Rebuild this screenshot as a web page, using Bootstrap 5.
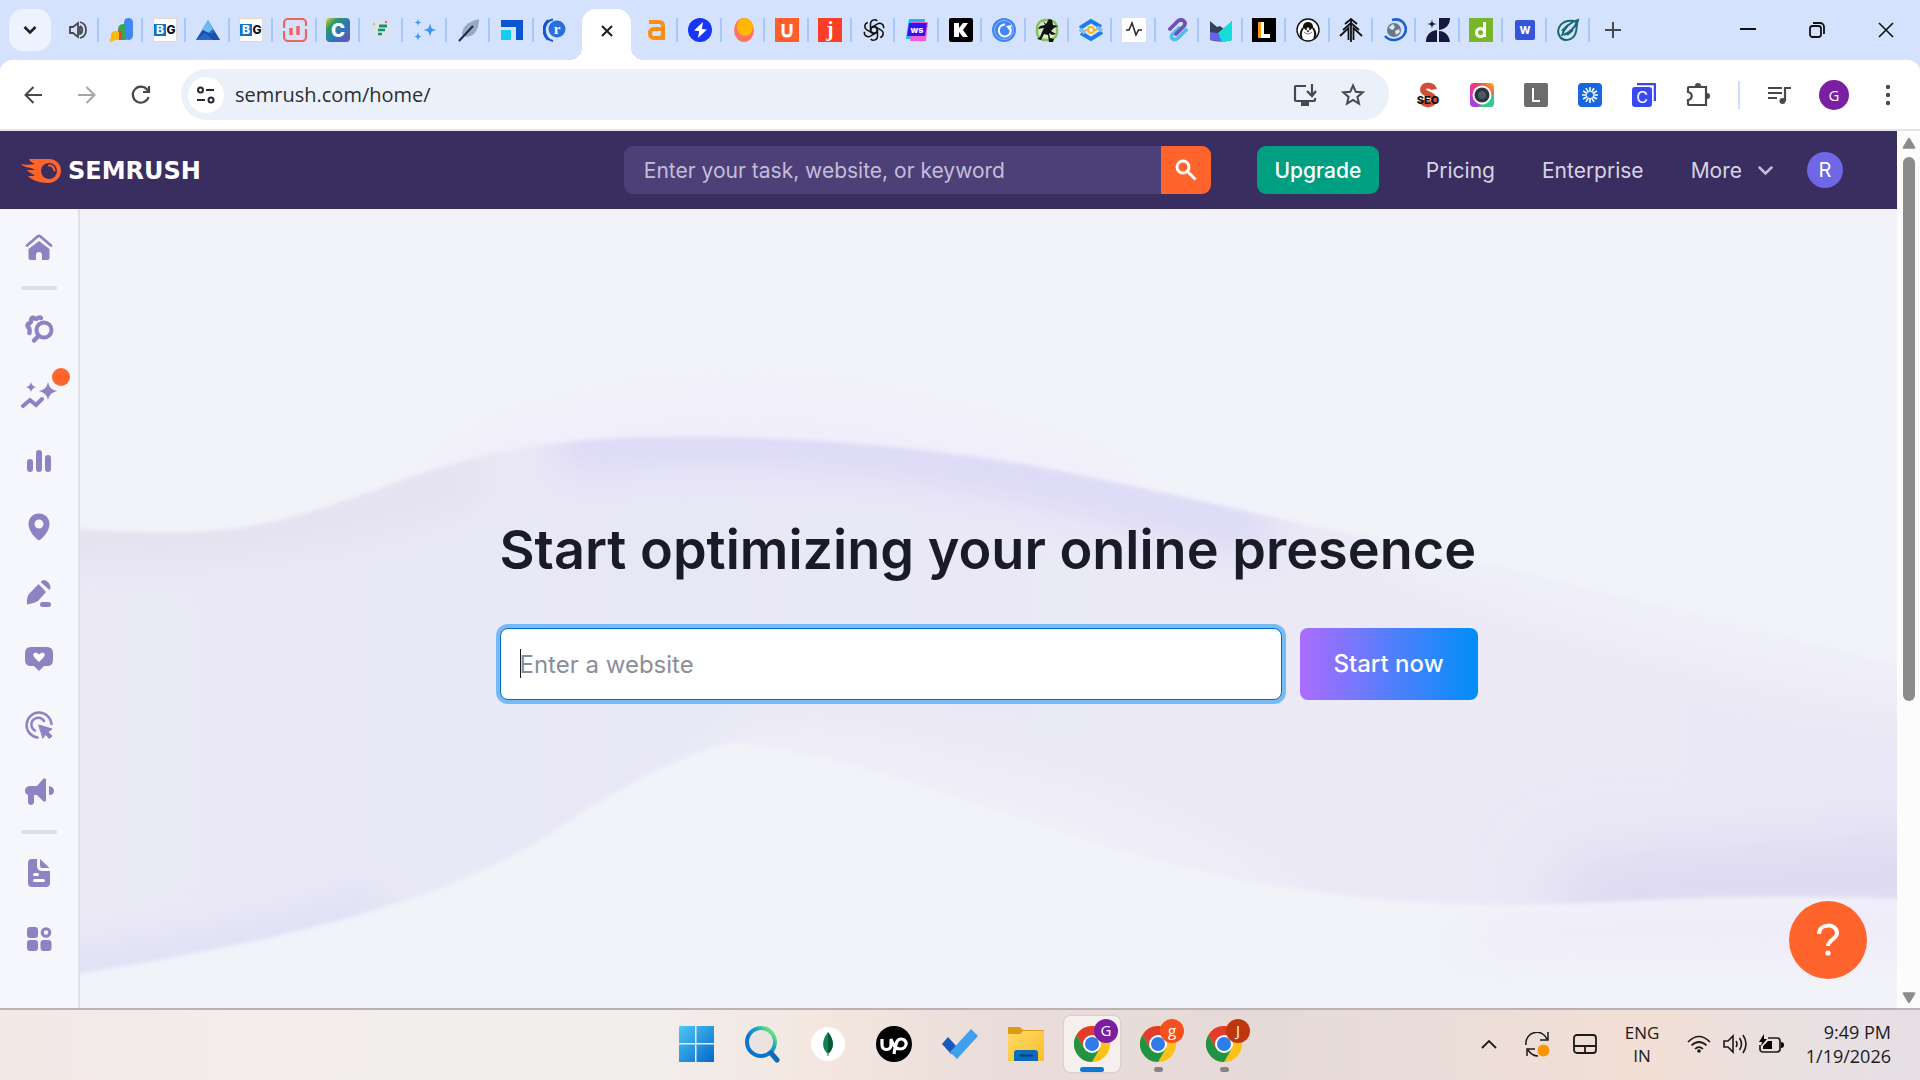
<!DOCTYPE html>
<html lang="en">
<head>
<meta charset="utf-8">
<meta name="viewport" content="width=device-width, initial-scale=1">
<title>Semrush Home</title>
<link href="https://cdn.jsdelivr.net/npm/bootstrap@5.3.0/dist/css/bootstrap.min.css" rel="stylesheet">
<style>
  body { font-family: Inter, "Liberation Sans", sans-serif; background: #f2f3f9; overflow: hidden; }
  button { border: 0; background: none; padding: 0; color: inherit; }
  svg { display: block; flex: none; }
  svg text { font-family: Inter, sans-serif; text-anchor: middle; }

  /* tab strip */
  .tab-strip { background: #d5e2fd; height: 60px; }
  .tab-search { width: 42px; height: 42px; margin: 0 5px 0 9px; border-radius: 14px; background: #edf3fe; }
  .tabs-before { flex: 0 1 521px; }
  .tabs-after { flex: 0 1 955px; }
  .tab-item { flex: 1 1 0; min-width: 0; height: 24px; background: linear-gradient(#a8c7fa, #a8c7fa) right center / 2px 24px no-repeat; }
  .tabs-before .tab-item:last-child { background: none; }
  .tab-active { width: 49px; height: 51px; margin: 0 4px 0 5px; background: #fff; border-radius: 14px 14px 0 0; }
  .tab-active::before, .tab-active::after { content: ""; position: absolute; bottom: 0; width: 12px; height: 12px; }
  .tab-active::before { right: 100%; background: radial-gradient(circle at 0 0, transparent 12px, #fff 12px); }
  .tab-active::after { left: 100%; background: radial-gradient(circle at 100% 0, transparent 12px, #fff 12px); }
  .new-tab { width: 46px; height: 42px; }
  .win-btn { width: 69px; height: 60px; }

  /* toolbar */
  .toolbar-wrap { background: #d5e2fd; }
  .toolbar { background: #fff; height: 71px; border-radius: 12px 12px 0 0; padding: 0 5px 0 6px; border-bottom: 2px solid #e2e3ea; }
  .tool-btn { width: 54px; height: 48px; }
  .address { height: 51px; border-radius: 26px; background: #ebf1fa; margin: 0 12px 0 13px; padding: 0 12px 0 7px; }
  .site-info { width: 36px; height: 36px; border-radius: 50%; background: #fff; }
  .address input { border: 0; background: none; outline: 0; padding: 0 0 0 11px; min-width: 0; font: 20px/28px "Open Sans", "Noto Sans", sans-serif; color: #2c2d30; }
  .addr-btn { width: 48px; height: 48px; }
  .tool-sep { width: 2px; height: 28px; margin: 0 13px; background: #cfe0fc; }
  .user-dot { width: 30px; height: 30px; border-radius: 50%; background: #7b1fa2; color: #fff; font: 15px/30px "Open Sans", sans-serif; }

  /* site header */
  .site-header { background: #392e5f; height: 78px; padding: 0 54px 0 21px; font-size: 21px; color: #d7d3e4; }
  .brand { color: #fff; font: bold 24px/30px "DejaVu Sans", sans-serif; gap: 7px; padding-top: 2px; }
  .brand:hover { color: #fff; }
  .site-search { flex: 0 1 587px; height: 48px; margin-right: 46px; border-radius: 9px; overflow: hidden; background: #4d4079; }
  .site-search input { border: 0; outline: 0; background: none; color: #fff; padding: 2px 20px 0; min-width: 0; font-size: 21px; }
  .site-search input::placeholder { color: #c4bcd9; opacity: 1; }
  .site-search button { width: 50px; background: #ff642d; }
  .head-nav { gap: 47px; }
  .head-nav a { color: #d7d3e4; padding-top: 2px; }
  .head-nav .upgrade { width: 122px; height: 48px; border-radius: 9px; background: #009f81; color: #fff; font-weight: 500; line-height: 46px; }
  .member { width: 36px; height: 36px; margin-left: 34px; border-radius: 50%; background: #6f67e6; color: #fff; font-size: 20px; line-height: 36px; }

  /* side bar */
  .side { width: 80px; padding-top: 5px; background: #f5f7fc; border-right: 2px solid #dfe1e9; color: #8f82c3; }
  .side a { height: 66px; color: inherit; }
  .side-sep { height: 16px; }
  .side-sep span { width: 36px; height: 4px; border-radius: 2px; background: #dfe1e6; }
  .news-dot { top: 6px; right: 8px; width: 18px; height: 18px; border-radius: 50%; background: #ff642d; }

  /* hero */
  .hero { background: #f2f3f9; }
  .hero-bg { inset: 0; width: 100%; height: 100%; }
  .hero-box { width: 978px; max-width: 100%; }
  .hero-box h1 { font-size: 54px; line-height: 64px; font-weight: 600; color: #191b26; margin-bottom: 46px; white-space: nowrap; }
  .hero-form { gap: 18px; }
  .hero-form input { height: 72px; min-width: 0; border: 1px solid #006dca; border-radius: 8px; padding: 2px 19px 0; font-size: 24px; outline: 0; box-shadow: 0 0 0 4px #76bbf5; background: linear-gradient(#191b26, #191b26) 19px center / 1px 29px no-repeat #fff; }
  .hero-form input::placeholder { color: #8a8e9b; opacity: 1; }
  .hero-form button { width: 178px; height: 72px; border-radius: 8px; font-size: 24px; font-weight: 500; color: #fff; background: linear-gradient(90deg, #ab6cfe, #008ff8); }
  .help { right: 30px; bottom: 29px; width: 78px; height: 78px; border-radius: 50%; background: #ff642d; }

  /* scroll track */
  .track { width: 23px; background: #fcfcfc; padding: 6px 0 4px; }
  .thumb { width: 12px; flex: 0 1 544px; margin-top: 8px; border-radius: 6px; background: #8b8b8b; }

  /* task bar */
  .task-bar { height: 72px; border-top: 2px solid #bbb2b5; background: linear-gradient(90deg, #f3e9e7, #f2eeed 20%, #f1eeec 34%, #f4e6df 43%, #e9dcd9 53%, #e6dad8 66%, #eaddd9 75%, #f2dfd5 86%, #e9e0e1 93%, #e5dfe5); color: #1b1b1b; font: 18px/24px "Open Sans", "Noto Sans", sans-serif; padding-bottom: 2px; }
  .app { width: 66px; height: 68px; }
  .app-tile { width: 56px; height: 56px; border-radius: 6px; }
  .app-open { background: #f5f0ee; box-shadow: 0 0 2px #b9aeac; }
  .app-run::after { content: ""; position: absolute; bottom: 0; width: 9px; height: 5px; border-radius: 3px; background: #8c8381; }
  .app-open::after { content: ""; position: absolute; bottom: 0; width: 24px; height: 5px; border-radius: 3px; background: #0a78d4; }
  .app-user { top: 3px; right: 2px; width: 24px; height: 24px; border-radius: 50%; color: #fff; font-size: 15px; line-height: 23px; }
  .task-side { padding: 0 29px; }
  .tray-wide { width: 48px; height: 60px; }
  .tray-slim { width: 36px; height: 60px; }
  .lang { width: 72px; padding-right: 6px; line-height: 23px; font-size: 17px; }
  .clock { width: 102px; }
</style>
<script src="https://cdn.jsdelivr.net/npm/bootstrap@5.3.0/dist/js/bootstrap.bundle.min.js"></script>
</head>
<body class="d-flex flex-column min-vh-100">

<svg width="0" height="0" class="position-absolute" aria-hidden="true">
  <symbol id="chrome" viewBox="0 0 36 36">
    <circle cx="18" cy="18" r="18" fill="#fbc116"/>
    <path d="M18 9H33.600A18 18 0 0 0 2.400 9L10.200 22.500Z" fill="#e33b2e"/>
    <path d="M2.400 9A18 18 0 0 0 18 36L25.800 22.500 18 18 10.200 22.500Z" fill="#229342"/>
    <circle cx="18" cy="18" r="9" fill="#fff"/><circle cx="18" cy="18" r="7" fill="#2f7bea"/>
  </symbol>
</svg>

<div class="tab-strip d-flex align-items-center">
  <button class="tab-search d-flex align-items-center justify-content-center" aria-label="Search tabs"><svg width="14" height="10" viewBox="0 0 14 10" fill="none" stroke="#1c1d20" stroke-width="2.500"><path d="m1.500 2 5.500 5.500L12.500 2"/></svg></button>
  <div class="tabs-before d-flex">
    <button class="tab-item d-flex justify-content-center" aria-label="Playing audio"><svg width="24" height="24" viewBox="0 0 24 24" fill="none" stroke="#46484d" stroke-width="1.800"><path d="M4 9v6h3l5 4V5L7 9Z"/><path d="M14 8v8c3-1 3-7 0-8M14 4c8 2 8 14 0 16"/></svg></button>
    <button class="tab-item d-flex justify-content-center" aria-label="Ads tab"><svg width="24" height="24" viewBox="0 0 24 24"><rect x="15" width="9" height="22" rx="4.500" fill="#4285f4"/><path d="M9 22V11a5 5 0 0 1 8-4v15Z" fill="#34a853"/><path d="M9 12c3 0 4 3 4 10H9Z" fill="#ea4335"/><path d="M2 16c2-4 7-4 8-1v7H6l-4 2-2-2 2-2Z" fill="#fbbc04"/></svg></button>
    <button class="tab-item d-flex justify-content-center" aria-label="BG tab"><svg width="24" height="24" viewBox="0 0 24 24"><path d="M.5.5h23v23H.5Z" fill="#fff" stroke="#e6d8c8"/><path d="M1 6h12v12H1Z" fill="#1573c6"/><text x="7" y="16" font-size="12" font-weight="800" fill="#fff">B</text><text x="18" y="16" font-size="12" font-weight="800" fill="#111">G</text></svg></button>
    <button class="tab-item d-flex justify-content-center" aria-label="Mountain tab"><svg width="24" height="24" viewBox="0 0 24 24"><path d="M12 2 24 22H0Z" fill="#2d6fd0"/><path d="m12 2 5 9-5 4-6-3Z" fill="#6fb9f2"/><path d="m7 12 8 4 3-3 6 9H0Z" fill="#1b4fae"/><path d="m1 21 8-6 8 7H0Z" fill="#2b67c8"/></svg></button>
    <button class="tab-item d-flex justify-content-center" aria-label="BG tab"><svg width="24" height="24" viewBox="0 0 24 24"><path d="M.5.5h23v23H.5Z" fill="#fff" stroke="#e6d8c8"/><path d="M1 6h12v12H1Z" fill="#1573c6"/><text x="7" y="16" font-size="12" font-weight="800" fill="#fff">B</text><text x="18" y="16" font-size="12" font-weight="800" fill="#111">G</text></svg></button>
    <button class="tab-item d-flex justify-content-center" aria-label="Charts tab"><svg width="24" height="24" viewBox="0 0 24 24" fill="none" stroke="#f1645b" stroke-width="2.200"><path d="M1 10V5a4 4 0 0 1 4-4h14a4 4 0 0 1 4 4v3M1 13v6a4 4 0 0 0 4 4h14a4 4 0 0 0 4-4v-8"/><path d="M8 10v7M15 8v9" stroke-width="3.500"/></svg></button>
    <button class="tab-item d-flex justify-content-center" aria-label="C tab"><svg width="24" height="24" viewBox="0 0 24 24"><defs><linearGradient id="cg" x1="0" y1="0" x2="1" y2="1"><stop stop-color="#e7d23a"/><stop offset=".25" stop-color="#2d9a63"/><stop offset=".55" stop-color="#2a79b9"/><stop offset="1" stop-color="#6a50b8"/></linearGradient></defs><rect width="24" height="24" rx="4" fill="url(#cg)"/><text x="12" y="19" font-size="19" font-weight="800" fill="#fff">C</text></svg></button>
    <button class="tab-item d-flex justify-content-center" aria-label="F tab"><svg width="24" height="24" viewBox="0 0 24 24"><circle cx="12" cy="12" r="10" fill="#dde4ea"/><path d="M9 8h8" stroke="#17936a" stroke-width="3"/><path d="M8 12h7" stroke="#17936a" stroke-width="2.500"/><path d="M8 16h4" stroke="#17936a" stroke-width="2.500"/><circle cx="4" cy="6" r="1.200" fill="#f2b540"/><circle cx="16" cy="4" r="1.200" fill="#e66"/></svg></button>
    <button class="tab-item d-flex justify-content-center" aria-label="Sparkles tab"><svg width="24" height="24" viewBox="0 0 24 24" fill="#3f97f0"><path d="M17 5c1 5 1.500 6 6.500 7-5 1-5.500 2-6.500 7-1-5-1.500-6-6.500-7 5-1 5.500-2 6.500-7ZM5 1c.5 2.500 1 3 3.500 3.500C6 5 5.500 5.500 5 8c-.5-2.500-1-3-3.500-3.500C4 4 4.500 3.500 5 1ZM5 14c.5 3 1 4 4 4.500-3 .5-3.500 1.500-4 4.500-.5-3-1-4-4-4.500 3-.5 3.500-1.500 4-4.500Z"/></svg></button>
    <button class="tab-item d-flex justify-content-center" aria-label="Feather tab"><svg width="24" height="24" viewBox="0 0 24 24"><path d="M22 1C10 4 5 9 5 17l5 2c8-1 12-8 12-18Z" fill="#9aa9c2"/><path d="M2 23 16 8" stroke="#14285c" stroke-width="2"/></svg></button>
    <button class="tab-item d-flex justify-content-center" aria-label="Blocks tab"><svg width="24" height="24" viewBox="0 0 24 24"><path d="M1 2h22v20h-7V9H1Z" fill="#0a55d4"/><path d="M1 12h10v10H1Z" fill="#14cdf5"/></svg></button>
    <button class="tab-item d-flex justify-content-center" aria-label="R tab"><svg width="24" height="24" viewBox="0 0 24 24"><path d="M10 1.500C-1 3-1 21 10 23M5 2c-6 6-6 14 0 20" fill="none" stroke="#1257cf" stroke-width="2"/><circle cx="14" cy="11" r="8.500" fill="#2a6fe0"/><text x="14" y="16" font-size="15" font-weight="700" fill="#fff" style="font-family:'Liberation Serif',serif">r</text></svg></button>
  </div>
  <button class="tab-active position-relative align-self-end d-flex align-items-center justify-content-center pb-2" aria-label="Close current tab"><svg width="12" height="12" viewBox="0 0 12 12" stroke="#1c1d20" stroke-width="2"><path d="m1 1 10 10M11 1 1 11"/></svg></button>
  <div class="tabs-after d-flex">
    <button class="tab-item d-flex justify-content-center" aria-label="Ahrefs tab"><svg width="24" height="24" viewBox="0 0 24 24" fill="none" stroke="#ff8d13" stroke-width="4"><path d="M4 4h10q4 0 4 4v14M18 11h-9q-4 0-4 4.500T9 20h4q5 0 5-4"/></svg></button>
    <button class="tab-item d-flex justify-content-center" aria-label="Bolt tab"><svg width="24" height="24" viewBox="0 0 24 24"><circle cx="12" cy="12" r="12" fill="#1736f5"/><path d="m15 4-9 8.500 5 .5v1l-1 6 9-8.500-5-.5v-1Z" fill="#fff"/></svg></button>
    <button class="tab-item d-flex justify-content-center" aria-label="Egg tab"><svg width="24" height="24" viewBox="0 0 24 24"><ellipse cx="12" cy="12" rx="10" ry="12" fill="#fb7660"/><ellipse cx="13" cy="9" rx="8" ry="9" fill="#ffb800"/></svg></button>
    <button class="tab-item d-flex justify-content-center" aria-label="U tab"><svg width="24" height="24" viewBox="0 0 24 24"><path d="M0 0h24v24H0Z" fill="#ff5e2b"/><path d="M8 6v8q0 4 4 4t4-4V6" fill="none" stroke="#fff" stroke-width="3"/></svg></button>
    <button class="tab-item d-flex justify-content-center" aria-label="J tab"><svg width="24" height="24" viewBox="0 0 24 24"><path d="M0 0h24v24H0Z" fill="#fb3e25"/><text x="12" y="18" font-size="21" font-weight="700" fill="#fff" style="font-family:'Liberation Serif',serif">j</text></svg></button>
    <button class="tab-item d-flex justify-content-center" aria-label="Assistant tab"><svg width="24" height="24" viewBox="0 0 24 24" fill="none" stroke="#111" stroke-width="1.500"><path id="petal" d="M12 8.500 8.500 10.500V5.800a4 4 0 0 1 6.800-2.900M8.500 10.500v3.500"/><use href="#petal" transform="rotate(60 12 12)"/><use href="#petal" transform="rotate(120 12 12)"/><use href="#petal" transform="rotate(180 12 12)"/><use href="#petal" transform="rotate(240 12 12)"/><use href="#petal" transform="rotate(300 12 12)"/></svg></button>
    <button class="tab-item d-flex justify-content-center" aria-label="WS tab"><svg width="24" height="24" viewBox="0 0 24 24"><path d="M4 1h16l-2 20H1Z" fill="#13bdf5"/><path d="M7 4h16l-2 19H5Z" fill="#f25ed6"/><path d="M4 5h18l-2 13H2Z" fill="#3a11ee"/><text x="12" y="15" font-size="9" font-weight="800" fill="#fff">ws</text></svg></button>
    <button class="tab-item d-flex justify-content-center" aria-label="K tab"><svg width="24" height="24" viewBox="0 0 24 24"><rect width="24" height="24" rx="2" fill="#000"/><path d="M5 5h5v5l4-5h5l-5 7 5 7h-5l-4-5v5H5Z" fill="#fff"/></svg></button>
    <button class="tab-item d-flex justify-content-center" aria-label="Cycle tab"><svg width="24" height="24" viewBox="0 0 24 24"><circle cx="12" cy="12" r="12" fill="#4285f4"/><circle cx="12" cy="12" r="9.500" fill="none" stroke="#8fb7f9" stroke-width="1"/><path d="M13 6.500a6 6 0 1 0 5.500 4" fill="none" stroke="#fff" stroke-width="2"/><path d="m14 8 6-1-2 6Z" fill="#fff"/></svg></button>
    <button class="tab-item d-flex justify-content-center" aria-label="Frog tab"><svg width="24" height="24" viewBox="0 0 24 24"><rect x="2" y="2" width="20" height="20" rx="8" fill="#d7ecc8" stroke="#84bf58" stroke-width="2.500"/><path d="m8 3 3 3 3-5 3 1 1 5 5 1-4 2-3 3 5 3-4 1-3-2 1 5 4 1-1 3h-4l-1-7-4-1-3 6-4-1 3-2 2-5 2-4-6 1 2-3 5-1Z" fill="#111"/></svg></button>
    <button class="tab-item d-flex justify-content-center" aria-label="Diamond tab"><svg width="24" height="24" viewBox="0 0 24 24" fill="none" stroke-width="4"><path d="m12 6 8 6-8 6-8-6Z" fill="#eaf2fe"/><path d="M22 9 12 3 1 10" stroke="#1b7cf0"/><path d="M2 15l10 6 11-7" stroke="#1b7cf0"/><path d="m1 11 5 4M23 13l-5-4" stroke="#7fbcfa"/><circle cx="12" cy="12" r="3" stroke="#fbb41c" stroke-width="2"/><path d="M6 12h3M15 12h3" stroke="#fbb41c" stroke-width="2"/></svg></button>
    <button class="tab-item d-flex justify-content-center" aria-label="Pulse tab"><svg width="24" height="24" viewBox="0 0 24 24"><path d="M0 0h24v24H0Z" fill="#fff"/><path d="M4 12h3l3-7 4 12 2.500-5H20" fill="none" stroke="#26282d" stroke-width="1.600"/></svg></button>
    <button class="tab-item d-flex justify-content-center" aria-label="Clip tab"><svg width="24" height="24" viewBox="0 0 24 24" fill="none" stroke-width="3.800" stroke-linecap="round"><path d="m13 10-7 7c-2 4 3 6 6 3l8-8" stroke="#4fbdf1"/><path d="m4 11 8-8c4-3 9 1 6 5l-8 8" stroke="#7050b4"/></svg></button>
    <button class="tab-item d-flex justify-content-center" aria-label="Peaks tab"><svg width="24" height="24" viewBox="0 0 24 24"><path d="m1 3 7 6 3-1 4 3 8-8v19q-11 3-22 0Z" fill="#373f5b"/><path d="M23 3v19q-6 2-11 1L9 15Z" fill="#14dbdc"/><path d="m1 14 8 1 3 8q-6 0-11-1Z" fill="#6365e7"/></svg></button>
    <button class="tab-item d-flex justify-content-center" aria-label="L tab"><svg width="24" height="24" viewBox="0 0 24 24"><path d="M0 0h24v24H0Z"/><path d="M8 4h4v12h6v4H8Z" fill="#fff"/><path d="M6 4h3v16H6Z" fill="#fb9a16"/></svg></button>
    <button class="tab-item d-flex justify-content-center" aria-label="Badger tab"><svg width="24" height="24" viewBox="0 0 24 24"><circle cx="12" cy="12" r="11" fill="#fff" stroke="#111" stroke-width="1.400"/><path d="M7 10c-1-8 11-8 10 0l-2 1q-3-3-6 0Z" fill="#111"/><path d="M7 10q-4 6-1 10M17 10q4 6 1 10" stroke="#111" stroke-width="2" fill="none"/><path d="M8 14q4 4 8 0" stroke="#777" fill="none"/><circle cx="10" cy="11" r="1"/><circle cx="14" cy="11" r="1"/><path d="m10.500 12.500 1.500 2 1.500-2Z"/></svg></button>
    <button class="tab-item d-flex justify-content-center" aria-label="Tree tab"><svg width="24" height="24" viewBox="0 0 24 24" fill="none" stroke="#111" stroke-width="1.800"><path d="M12 1v23M6 6l6-5 6 5M4 12l8-7 8 7M1 18l8.500-8v12M23 18l-8.500-8v12"/></svg></button>
    <button class="tab-item d-flex justify-content-center" aria-label="Globe tab"><svg width="24" height="24" viewBox="0 0 24 24"><path d="M9 2c10-3 16 6 13 13S8 25 2 18" fill="none" stroke="#1a5fce" stroke-width="2.600"/><circle cx="11" cy="12" r="7" fill="#687786"/><path d="m6 9 4-3 2 3-2 3-3-1Zm6 4 4-2 1 3-4 3Z" fill="#dbe6ee"/></svg></button>
    <button class="tab-item d-flex justify-content-center" aria-label="Star tab"><svg width="24" height="24" viewBox="0 0 24 24" fill="#151a3c"><path d="M6 1c.5 4 1 4.500 5 5-4 .5-4.500 1-5 5-.5-4-1-4.500-5-5 4-.5 4.500-1 5-5ZM13 0h11c0 7-4 11-11 12ZM13 13c6 0 10 4 11 11H13ZM0 24c0-7 4-11 11-12v12Z"/></svg></button>
    <button class="tab-item d-flex justify-content-center" aria-label="D tab"><svg width="24" height="24" viewBox="0 0 24 24"><path d="M0 0h24v24H0Z" fill="#78b72a"/><path d="M15.500 4v15" stroke="#fff" stroke-width="3"/><circle cx="11.500" cy="14.500" r="4" fill="none" stroke="#fff" stroke-width="3"/></svg></button>
    <button class="tab-item d-flex justify-content-center" aria-label="W tab"><svg width="24" height="24" viewBox="0 0 24 24"><rect x="2" y="2" width="20" height="20" rx="2" fill="#3454d9"/><text x="12" y="16" font-size="13" font-weight="700" fill="#fff">w</text></svg></button>
    <button class="tab-item d-flex justify-content-center" aria-label="Leaf tab"><svg width="24" height="24" viewBox="0 0 24 24" fill="none" stroke="#176872" stroke-width="2"><path d="M18 3C6 1 0 10 3 17s14 7 17-3c1-3 0-6 2-12C14 4 8 10 6 18M8 17C18 12 20 7 21 3M6 13l6-6M11 17l6-5"/></svg></button>
  </div>
  <button class="new-tab d-flex align-items-center justify-content-center" aria-label="New tab"><svg width="16" height="16" viewBox="0 0 16 16" stroke="#46484d" stroke-width="2"><path d="M8 0v16M0 8h16"/></svg></button>
  <div class="ms-auto d-flex">
    <button class="win-btn d-flex align-items-center justify-content-center" aria-label="Minimize"><svg width="16" height="16" viewBox="0 0 16 16" stroke="#111" stroke-width="2"><path d="M0 7h16"/></svg></button>
    <button class="win-btn d-flex align-items-center justify-content-center" aria-label="Restore"><svg width="16" height="16" viewBox="0 0 16 16" fill="none" stroke="#111" stroke-width="1.800"><rect x="1" y="4" width="11" height="11" rx="2.500"/><path d="M4 1h7a4 4 0 0 1 4 4v7"/></svg></button>
    <button class="win-btn d-flex align-items-center justify-content-center" aria-label="Close"><svg width="16" height="16" viewBox="0 0 16 16" stroke="#111" stroke-width="1.600"><path d="m1 1 14 14M15 1 1 15"/></svg></button>
  </div>
</div>

<div class="toolbar-wrap">
  <div class="toolbar d-flex align-items-center">
    <button class="tool-btn d-flex align-items-center justify-content-center" aria-label="Back"><svg width="18" height="18" viewBox="0 0 18 18" fill="none" stroke="#46484d" stroke-width="2"><path d="M18 9H2M9.500 1 1.500 9l8 8"/></svg></button>
    <button class="tool-btn d-flex align-items-center justify-content-center" aria-label="Forward"><svg width="18" height="18" viewBox="0 0 18 18" fill="none" stroke="#a4a6aa" stroke-width="2"><path d="M0 9h16M8.500 1l8 8-8 8"/></svg></button>
    <button class="tool-btn d-flex align-items-center justify-content-center" aria-label="Reload"><svg width="20" height="20" viewBox="0 0 20 20" fill="none" stroke="#46484d" stroke-width="2.200"><path d="M17.500 12A8 8 0 1 1 16 4.500L18 7M18 1v6h-6"/></svg></button>
    <div class="address flex-fill d-flex align-items-center">
      <button class="site-info d-flex align-items-center justify-content-center" aria-label="Site information"><svg width="20" height="18" viewBox="0 0 20 18" fill="none" stroke="#26282c" stroke-width="2"><circle cx="4.500" cy="4" r="2.500"/><circle cx="15" cy="14" r="2.500"/><path d="M10 4h8M1 14h8"/></svg></button>
      <input class="flex-fill" type="text" value="semrush.com/home/" aria-label="Address">
      <button class="addr-btn d-flex align-items-center justify-content-center" aria-label="Install app"><svg width="24" height="24" viewBox="0 0 24 24" fill="none" stroke="#46484d" stroke-width="2.200"><path d="M13 3H3q-1 0-1 1v13q0 1 1 1h18q1 0 1-1v-2M19 1v11M14 8l5 5 4-5"/><path d="M8 21h8" stroke-width="4"/></svg></button>
      <button class="addr-btn d-flex align-items-center justify-content-center" aria-label="Bookmark"><svg width="24" height="24" viewBox="0 0 24 24" fill="none" stroke="#46484d" stroke-width="2"><path d="m12 2.500 2.800 6.300 6.800.6-5.200 4.500 1.600 6.700-6-3.600-6 3.600 1.600-6.700-5.200-4.500 6.800-.6Z"/></svg></button>
    </div>
    <button class="tool-btn d-flex align-items-center justify-content-center" aria-label="SEO extension"><svg width="26" height="26" viewBox="0 0 26 26"><path d="M19 7.500C18 2 8 2 8 7.500s11 4 11 10-10 6-12 1" fill="none" stroke="#d34c36" stroke-width="6"/><text x="13" y="22" font-size="11" font-weight="800" fill="#111">SEO</text></svg></button>
    <button class="tool-btn d-flex align-items-center justify-content-center" aria-label="Camera extension"><svg width="24" height="24" viewBox="0 0 24 24"><defs><linearGradient id="cam" x1="0" y1="1" x2="1" y2="0"><stop stop-color="#7e4df3"/><stop offset=".3" stop-color="#d833c4"/><stop offset=".65" stop-color="#fa3f54"/><stop offset="1" stop-color="#fbb614"/></linearGradient></defs><rect width="24" height="24" rx="4" fill="url(#cam)"/><path d="M24 10v10q0 4-4 4H8Z" fill="#35c98d"/><circle cx="12" cy="12" r="9.500" fill="#fff"/><circle cx="12" cy="12" r="7.500" fill="#2c3440"/><circle cx="12" cy="12" r="4" fill="#4e5a68"/></svg></button>
    <button class="tool-btn d-flex align-items-center justify-content-center" aria-label="L extension"><svg width="24" height="24" viewBox="0 0 24 24"><rect width="24" height="24" rx="2" fill="#6c6c6c"/><path d="M9 5v13h7" fill="none" stroke="#fff" stroke-width="2"/></svg></button>
    <button class="tool-btn d-flex align-items-center justify-content-center" aria-label="Burst extension"><svg width="24" height="24" viewBox="0 0 24 24" stroke="#fff" stroke-width="1.600"><rect width="24" height="24" rx="4" fill="#1967dc" stroke="none"/><g id="rays"><path d="M12 4v5M12 15v5M4 12h5M15 12h5"/></g><use href="#rays" transform="rotate(30 12 12)"/><use href="#rays" transform="rotate(60 12 12)"/></svg></button>
    <button class="tool-btn d-flex align-items-center justify-content-center" aria-label="C extension"><svg width="24" height="24" viewBox="0 0 24 24"><path d="M5 1h17q1 0 1 1v16" fill="none" stroke="#3a48f2" stroke-width="2.500"/><rect y="4" width="20" height="20" rx="3" fill="#3a48f2"/><text x="10" y="20" font-size="16" fill="#fff">C</text></svg></button>
    <button class="tool-btn d-flex align-items-center justify-content-center" aria-label="Extensions"><svg width="24" height="24" viewBox="0 0 24 24" fill="none" stroke="#46484d" stroke-width="2.200"><path d="M3 4h17v18H3q-1 0-1-1v-4c5-1 5-7 0-8V5q0-1 1-1Z"/><path d="M9 3a3 3 0 0 1 6 0ZM21 10a3 3 0 0 1 0 6Z" fill="#46484d" stroke="none"/></svg></button>
    <span class="tool-sep"></span>
    <button class="tool-btn d-flex align-items-center justify-content-center" aria-label="Media controls"><svg width="24" height="20" viewBox="0 0 24 20" fill="none" stroke="#46484d" stroke-width="2.200"><path d="M0 3h14M0 8h14M0 13h9M17 16V3h6"/><circle cx="14.500" cy="16" r="3" fill="#46484d" stroke="none"/></svg></button>
    <button class="tool-btn d-flex align-items-center justify-content-center" aria-label="Profile"><span class="user-dot">G</span></button>
    <button class="tool-btn d-flex align-items-center justify-content-center" aria-label="Menu"><svg width="6" height="22" viewBox="0 0 6 22" fill="#46484d"><circle cx="3" cy="3" r="2.200"/><circle cx="3" cy="11" r="2.200"/><circle cx="3" cy="19" r="2.200"/></svg></button>
  </div>
</div>

<div class="d-flex flex-fill">
  <div class="d-flex flex-column flex-fill">
    <header class="site-header d-flex align-items-center">
      <a class="brand d-flex align-items-center text-decoration-none" href="#"><svg width="40" height="26" viewBox="0 0 40 26"><path d="M8 1h20c8 0 12 6 12 12s-5 12-13 12c-9 0-16-3-20-7h7c-3-3-7-4-8-6h8C10 9 3 10 0 6c3 1 9 1 14 0-2-1-5-2-6-5Z" fill="#ff642d"/><circle cx="28" cy="13" r="8" fill="#392e5f"/><path d="M28 7.500c3 0 5 2 5.500 5" fill="none" stroke="#ff642d" stroke-width="2" stroke-linecap="round"/></svg>SEMRUSH</a>
      <form class="site-search ms-auto d-flex">
        <input class="flex-fill" type="text" placeholder="Enter your task, website, or keyword" aria-label="Search">
        <button class="d-flex align-items-center justify-content-center" type="button" aria-label="Search"><svg width="22" height="22" viewBox="0 0 22 22" fill="none" stroke="#fff" stroke-width="3"><circle cx="8" cy="8" r="6"/><path d="m12.500 12.500 8 8"/></svg></button>
      </form>
      <nav class="head-nav d-flex align-items-center">
        <a class="upgrade text-center text-decoration-none" href="#">Upgrade</a>
        <a class="text-decoration-none" href="#">Pricing</a>
        <a class="text-decoration-none" href="#">Enterprise</a>
        <a class="text-decoration-none d-flex align-items-center gap-3" href="#">More<svg width="15" height="10" viewBox="0 0 15 10" fill="none" stroke="#c4bcd9" stroke-width="2.500" stroke-linecap="round"><path d="m1.500 1.500 6 6 6-6"/></svg></a>
      </nav>
      <button class="member" aria-label="Account">R</button>
    </header>

    <div class="d-flex flex-fill">
      <nav class="side d-flex flex-column">
        <a class="d-flex align-items-center justify-content-center" href="#" aria-label="Home"><svg width="28" height="28" viewBox="0 0 28 28"><path d="M2 12.500 12.500 3.500q1.500-1.200 3 0L26 12.500" fill="none" stroke="currentColor" stroke-width="2.800" stroke-linecap="round"/><path d="M3.500 16 14 8l10.500 8v9q0 2-2 2H17v-5q0-3-3-3t-3 3v5H5.500q-2 0-2-2Z" fill="currentColor"/></svg></a>
        <div class="side-sep d-flex align-items-center justify-content-center"><span></span></div>
        <a class="d-flex align-items-center justify-content-center" href="#" aria-label="SEO"><svg width="30" height="30" viewBox="0 0 30 30" fill="none" stroke="currentColor" stroke-linecap="round" stroke-linejoin="round"><path d="M17 4q-1-1-3 0-2 1.500-4 0-3-1-3 3 0 2-3 3-1.500 1.500 1 4 1 2 .5 5" stroke-width="4.500"/><circle cx="20" cy="16" r="7.500" stroke-width="4"/><path d="m14.500 22-4.500 4.500" stroke-width="4.500"/></svg></a>
        <a class="d-flex align-items-center justify-content-center position-relative" href="#" aria-label="AI"><svg width="36" height="28" viewBox="0 0 36 28"><path d="m2 25 7-6 6 5 6-6" fill="none" stroke="currentColor" stroke-width="4" stroke-linecap="round"/><path d="M27 1q1.500 8 9 9-7.500 1.500-9 9-1.500-7.500-9-9 7.500-1 9-9ZM10 1q1 4.500 5 5-4 1-5 5-1-4-5-5 4-.5 5-5Z" fill="currentColor"/></svg><span class="news-dot position-absolute"></span></a>
        <a class="d-flex align-items-center justify-content-center" href="#" aria-label="Traffic"><svg width="26" height="24" viewBox="0 0 26 24" stroke="currentColor" stroke-width="6" stroke-linecap="round"><path d="M4 13v7M13 4v16M22 9v11"/></svg></a>
        <a class="d-flex align-items-center justify-content-center" href="#" aria-label="Local"><svg width="22" height="28" viewBox="0 0 22 28"><path fill-rule="evenodd" d="M11 .5c6 0 10.500 4.500 10.500 10.500 0 8-8 15-10.500 16.500C8.500 26 .5 19 .5 11 .5 5 5 .5 11 .5Zm0 6a4.500 4.500 0 1 0 0 9 4.500 4.500 0 0 0 0-9Z" fill="currentColor"/></svg></a>
        <a class="d-flex align-items-center justify-content-center" href="#" aria-label="Content"><svg width="26" height="28" viewBox="0 0 26 28" fill="currentColor"><path d="m12.500 5 7.500 8-8 9q-5 3-11 3.500Q.500 18 3 15ZM14.500 3q3-4 7.500 0 4 4 1.500 8Z"/><rect x="14" y="23" width="11" height="5" rx="2.500"/></svg></a>
        <a class="d-flex align-items-center justify-content-center" href="#" aria-label="Social"><svg width="28" height="26" viewBox="0 0 28 26"><path d="M6 1h16q6 0 6 6v7q0 6-6 6h-3l-5 5-5-5H6q-6 0-6-6V7q0-6 6-6Z" fill="currentColor"/><path d="m14 16-4.500-4.500C6 7 11 5 14 8.500 17 5 22 7 18.500 11.500Z" fill="#fff"/></svg></a>
        <a class="d-flex align-items-center justify-content-center" href="#" aria-label="Advertising"><svg width="28" height="28" viewBox="0 0 28 28" fill="none" stroke="currentColor" stroke-width="2.500" stroke-linecap="round"><path d="M12.500 26.500A12.500 12.500 0 1 1 26.500 13M10 19.500A6.800 6.800 0 1 1 19 10"/><path d="m14 14 13 4-4 3 4 4-2.500 2.500-4-4-2.500 3.500Z" fill="currentColor" stroke-width="1"/></svg></a>
        <a class="d-flex align-items-center justify-content-center" href="#" aria-label="PR"><svg width="30" height="28" viewBox="0 0 30 28" fill="currentColor"><path d="M5 9h8l6-7q3-2 3 1v20q0 3-3 1l-6-6h-3v8q-3 4-6 0v-8q-3-1-3-4.500T5 9ZM25 9q5 1 5 5t-5 4Z"/></svg></a>
        <div class="side-sep d-flex align-items-center justify-content-center"><span></span></div>
        <a class="d-flex align-items-center justify-content-center" href="#" aria-label="Reports"><svg width="22" height="28" viewBox="0 0 22 28"><path d="M4 0h5v7q0 5 5 5h8v12q0 4-4 4H4q-4 0-4-4V4q0-4 4-4Zm8 0 9.500 9H14q-2 0-2-2Z" fill="currentColor"/><path d="M6.500 15.500h3M6.500 21.500h9" stroke="#fff" stroke-width="3" stroke-linecap="round"/></svg></a>
        <a class="d-flex align-items-center justify-content-center" href="#" aria-label="Apps"><svg width="26" height="26" viewBox="0 0 26 26" fill="currentColor"><rect x="1" y="1" width="11" height="11" rx="3"/><rect x="1" y="14" width="11" height="11" rx="3"/><rect x="14.500" y="14" width="11" height="11" rx="3"/><circle cx="20" cy="6.500" r="3.800" fill="none" stroke="currentColor" stroke-width="3"/></svg></a>
      </nav>

      <main class="hero flex-fill position-relative d-flex align-items-center justify-content-center">
        <svg class="hero-bg position-absolute" viewBox="0 0 1817 799" preserveAspectRatio="none" aria-hidden="true">
          <defs>
            <linearGradient id="sheet" x1="0" y1="0" x2="1" y2="0"><stop stop-color="#ebe9f6"/><stop offset=".35" stop-color="#e8e7f6"/><stop offset=".6" stop-color="#ebe9f6"/><stop offset="1" stop-color="#eae8f6"/></linearGradient>
            <filter id="soft" filterUnits="userSpaceOnUse" x="-100" y="-100" width="2017" height="999"><feGaussianBlur stdDeviation="2"/></filter>
            <filter id="haze" filterUnits="userSpaceOnUse" x="-200" y="-200" width="2217" height="1199"><feGaussianBlur stdDeviation="22"/></filter>
            <filter id="mist" filterUnits="userSpaceOnUse" x="-200" y="-200" width="2217" height="1199"><feGaussianBlur stdDeviation="36"/></filter>
            <clipPath id="wave"><path d="M-60 316Q0 320 0 320C60 324 110 325 150 320C290 303 350 228 587 228C750 226 880 245 939 254C1050 275 1180 305 1256 322C1400 350 1600 400 1877 470V693C1700 683 1600 690 1500 694C1300 705 1150 670 1056 647C900 600 780 550 657 533C600 545 560 570 505 601C400 680 260 725-60 774Z"/></clipPath>
          </defs>
          <path d="M350 260Q550 160 800 200L1100 280 900 330H350Z" fill="#f0edfb" filter="url(#mist)"/>
          <path d="M1450 700 1917 690V745H1350Z" fill="#eeebfa" filter="url(#haze)"/>
          <g filter="url(#soft)">
            <g clip-path="url(#wave)">
              <path d="M-100 0h2017v799H-100Z" fill="url(#sheet)"/>
              <path d="M480 240Q600 218 760 235T1190 325" fill="none" stroke="#d9d6f6" stroke-width="44" filter="url(#haze)"/>
              <path d="M-60 325Q200 350 400 262" fill="none" stroke="#dfdaeb" stroke-width="24" filter="url(#haze)"/>
              <path d="M-60 768Q160 755 300 700" fill="none" stroke="#d9daf7" stroke-width="30" filter="url(#haze)"/>
              <path d="M1480 690Q1680 680 1900 660" fill="none" stroke="#d8d3ee" stroke-width="60" filter="url(#mist)"/>
              <path d="M1300 300Q1500 340 1950 430V510Q1600 470 1300 350Z" fill="#f0f0f9" filter="url(#haze)"/>
              <path d="M560 660 657 530 760 530 1000 600 1250 710H560Z" fill="#f2f2f9" filter="url(#mist)"/>
            </g>
          </g>
        </svg>
        <div class="hero-box position-relative">
          <h1>Start optimizing your online presence</h1>
          <form class="hero-form d-flex">
            <input class="flex-fill" type="text" placeholder="Enter a website" aria-label="Website">
            <button type="button">Start now</button>
          </form>
        </div>
        <button class="help position-absolute d-flex align-items-center justify-content-center" aria-label="Help"><svg width="24" height="34" viewBox="0 0 24 34" fill="none" stroke="#fff" stroke-width="4"><path d="M3 11C3 0 21 0 21 10c0 6-9 7-9 13"/><circle cx="12" cy="30" r="2.600" fill="#fff" stroke="none"/></svg></button>
      </main>
    </div>
  </div>
  <div class="track d-flex flex-column align-items-center">
    <svg width="14" height="12" viewBox="0 0 16 13" fill="#8b8b8b"><path d="M7 1q1-1 2 0l6 10q1 2-1 2H2q-2 0-1-2Z"/></svg>
    <div class="thumb"></div>
    <svg class="mt-auto" width="14" height="12" viewBox="0 0 16 13" fill="#8b8b8b"><path d="M7 12q1 1 2 0l6-10q1-2-1-2H2Q0 0 1 2Z"/></svg>
  </div>
</div>

<footer class="task-bar d-flex align-items-center">
  <div class="task-side col"></div>
  <div class="d-flex">
    <button class="app d-flex align-items-center justify-content-center" aria-label="Start"><svg width="36" height="36" viewBox="0 0 36 36"><defs><linearGradient id="win" gradientUnits="userSpaceOnUse" x1="0" y1="0" x2="36" y2="36"><stop stop-color="#4dc8f8"/><stop offset="1" stop-color="#0569c8"/></linearGradient></defs><path d="M2 0h15v17H1V1ZM18.500 0H36v17H18.500ZM1 18.500h16V36H1ZM18.500 18.500H36V36H18.500Z" fill="url(#win)"/></svg></button>
    <button class="app d-flex align-items-center justify-content-center" aria-label="Search Windows"><svg width="36" height="38" viewBox="0 0 36 38" fill="none" stroke-linecap="round"><defs><linearGradient id="sr" x1="0" y1="1" x2="1" y2="0"><stop offset=".35" stop-color="#0874ce"/><stop offset=".65" stop-color="#16a5c6"/><stop offset=".85" stop-color="#61df80"/></linearGradient></defs><circle cx="17" cy="17" r="14" stroke="url(#sr)" stroke-width="4" fill="#ece3e1"/><path d="m27 28 6 7" stroke="#0d6bbe" stroke-width="5"/></svg></button>
    <button class="app d-flex align-items-center justify-content-center" aria-label="MongoDB"><svg width="36" height="36" viewBox="0 0 36 36"><circle cx="18" cy="18" r="17" fill="#fff"/><path d="M18 6c7 9 6 17 0 22-6-5-7-13 0-22Z" fill="#128250"/><path d="M18 6c7 9 6 17 0 22Z" fill="#0a583c"/><path d="M18 27v3" stroke="#71a98b" stroke-width="1.500"/></svg></button>
    <button class="app d-flex align-items-center justify-content-center" aria-label="Upwork"><svg width="36" height="36" viewBox="0 0 36 36" fill="none" stroke="#fff" stroke-width="3.200"><circle cx="18" cy="18" r="18" fill="#000" stroke="none"/><path d="M6 13v6c0 6 9 6 9 0v-6c2 7 5 10 9 10 8 0 8-10 1-10-4 0-5 3-7 15"/></svg></button>
    <button class="app d-flex align-items-center justify-content-center" aria-label="To Do"><svg width="36" height="32" viewBox="0 0 36 32"><path d="m6 9 10 11-7 6-9-10Z" fill="#1859ba"/><path d="M29 1 36 8 15 31 8 24Z" fill="#3fa0ee"/></svg></button>
    <button class="app d-flex align-items-center justify-content-center" aria-label="File Explorer"><svg width="36" height="36" viewBox="0 0 36 36"><defs><linearGradient id="fold" x1="0" y1="0" x2="1" y2="1"><stop stop-color="#ffdb67"/><stop offset="1" stop-color="#fbbd29"/></linearGradient></defs><path d="M0 2q0-1 1-1h11l3 3h20q1 0 1 1v15H0Z" fill="#dc9b12"/><path d="M0 8h12l3-3h20q1 0 1 1v29H0Z" fill="url(#fold)"/><path d="M6 35V27q0-3 3-3h18q3 0 3 3v8Z" fill="#0a6dbb"/><path d="M11 29.500h14" stroke="#063f7b" stroke-width="2"/></svg></button>
    <button class="app d-flex align-items-center justify-content-center" aria-label="Chrome, profile G"><span class="app-tile app-open position-relative d-flex align-items-center justify-content-center"><svg width="36" height="36"><use href="#chrome"/></svg><span class="app-user position-absolute" style="background:#7b1fa2">G</span></span></button>
    <button class="app d-flex align-items-center justify-content-center" aria-label="Chrome, profile g"><span class="app-tile app-run position-relative d-flex align-items-center justify-content-center"><svg width="36" height="36"><use href="#chrome"/></svg><span class="app-user position-absolute" style="background:#f4511e">g</span></span></button>
    <button class="app d-flex align-items-center justify-content-center" aria-label="Chrome, profile J"><span class="app-tile app-run position-relative d-flex align-items-center justify-content-center"><svg width="36" height="36"><use href="#chrome"/></svg><span class="app-user position-absolute" style="background:#bf360c">J</span></span></button>
  </div>
  <div class="task-side col d-flex align-items-center justify-content-end">
    <button class="tray-wide d-flex align-items-center justify-content-center" aria-label="Hidden icons"><svg width="16" height="10" viewBox="0 0 16 10" fill="none" stroke="#1b1b1b" stroke-width="1.800"><path d="m1 9 7-7 7 7"/></svg></button>
    <button class="tray-wide d-flex align-items-center justify-content-center" aria-label="Update"><svg width="25" height="25" viewBox="0 0 25 25" fill="none" stroke="#1b1b1b" stroke-width="1.500"><path d="M1 13A11 11 0 0 1 22 7M23 0v8h-8M2 24v-7h8M3 18q4 6 10 6"/><circle cx="18.500" cy="18.500" r="6" fill="#fb9503" stroke="none"/></svg></button>
    <button class="tray-wide d-flex align-items-center justify-content-center" aria-label="Touchpad"><svg width="24" height="20" viewBox="0 0 24 20" fill="none" stroke="#1b1b1b" stroke-width="1.800"><rect x="1" y="1" width="22" height="18" rx="3"/><path d="M1 12h22M12 12v7"/></svg></button>
    <button class="lang text-center" aria-label="Input language">ENG<br>IN</button>
    <button class="tray-slim d-flex align-items-center justify-content-center" aria-label="Wi-Fi"><svg width="24" height="18" viewBox="0 0 24 18" fill="none" stroke="#1b1b1b" stroke-width="1.700"><path d="M1 7q11-11 22 0M4.500 10.500q7.500-7 15 0M8 14q4-4 8 0"/><circle cx="12" cy="16" r="1.800" fill="#1b1b1b" stroke="none"/></svg></button>
    <button class="tray-slim d-flex align-items-center justify-content-center" aria-label="Volume"><svg width="25" height="20" viewBox="0 0 25 20" fill="none" stroke="#1b1b1b" stroke-width="1.600"><path d="M1 7v6h4l5 5V2L5 7ZM13 7q2 3 0 6M16.500 4q4 6 0 12M20 1q6 9 0 18"/></svg></button>
    <button class="tray-slim d-flex align-items-center justify-content-center" aria-label="Battery"><svg width="25" height="20" viewBox="0 0 25 20"><path d="M9 4h9q3 0 3 3v8q0 3-3 3H4q-3 0-3-3v-4" fill="none" stroke="#1b1b1b" stroke-width="1.700"/><path d="M9 7h4v8H4v-3ZM22 8q3 0 3 3t-3 3ZM5 0 0 8h3L2 12l6-7H5Z"/></svg></button>
    <button class="clock text-end" aria-label="Clock">9:49 PM<br>1/19/2026</button>
  </div>
</footer>
</body>
</html>
